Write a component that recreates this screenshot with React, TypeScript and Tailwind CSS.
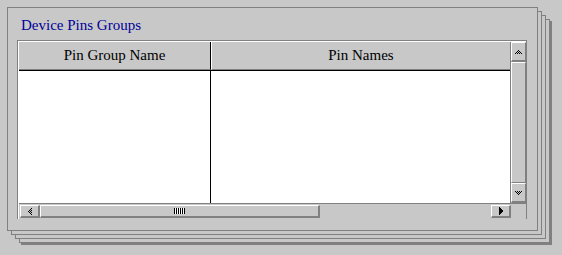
import React from 'react';

type Cell = [number, number];

// tiny pixel glyph for the scroll arrows (dithered / solid triangles)
const PixelGlyph: React.FC<{ cells: Cell[]; w: number; h: number }> = ({ cells, w, h }) => (
  <svg width={w} height={h} viewBox={`0 0 ${w} ${h}`} shapeRendering="crispEdges">
    {cells.map(([x, y]) => (
      <rect key={`${x}-${y}`} x={x} y={y} width={1} height={1} fill="#000" />
    ))}
  </svg>
);

const upCells: Cell[] = [[3, 0], [2, 1], [4, 1], [1, 2], [3, 2], [5, 2], [0, 3], [2, 3], [4, 3], [6, 3]];
const downCells: Cell[] = upCells.map(([x, y]) => [x, 3 - y] as Cell);
const leftCells: Cell[] = upCells.map(([x, y]) => [y, x] as Cell);
const rightCells: Cell[] = [
  [0, 0], [0, 1], [0, 2], [0, 3], [0, 4], [0, 5], [0, 6], [0, 7],
  [1, 1], [1, 2], [1, 3], [1, 4], [1, 5], [1, 6],
  [2, 2], [2, 3], [2, 4], [2, 5],
  [3, 3], [3, 4],
];

const App: React.FC = () => {
  return (
    <div className="relative w-[562px] h-[255px] overflow-hidden bg-[#c8c8c8] pl-[7px] pt-[7px] font-['Liberation_Serif',serif]">
      {/* pages stacked behind the front panel */}
      <div className="absolute left-[19px] top-[19px] w-[531px] h-[224px] border border-[#808080] bg-[#c8c8c8] shadow-[2px_2px_0_0_#808080]" />
      <div className="absolute left-[15px] top-[15px] w-[531px] h-[224px] border border-[#808080] bg-[#c8c8c8]" />
      <div className="absolute left-[11px] top-[11px] w-[531px] h-[224px] border border-[#808080] bg-[#c8c8c8]" />

      {/* Front panel */}
      <div className="relative w-[531px] h-[224px] border border-[#808080] bg-[#c8c8c8] pl-[9px] pt-[9px]">
        <div className="pl-[4px] h-[17px] text-[15px] leading-[17px] text-[#000099] whitespace-nowrap">
          Device Pins Groups
        </div>

        {/* Table frame */}
        <div className="mt-[6px] w-[510px] h-[179px] border-t border-l border-r border-[#808080] border-b-white">
          <div className="flex flex-col h-full border-t border-l border-white">
            {/* header + body + vertical scrollbar */}
            <div className="flex h-[161px]">
              <div className="flex flex-col w-[491px]">
                <div className="flex border-b border-black">
                  <div className="w-[192px] h-[28px] border-r border-black border-b border-b-[#808080] flex items-center justify-center text-[15px] text-black whitespace-nowrap">
                    Pin Group Name
                  </div>
                  <div className="flex-1 h-[28px] border-l border-white border-b border-b-[#808080] flex items-center justify-center text-[15px] text-black whitespace-nowrap">
                    Pin Names
                  </div>
                </div>
                <div className="flex flex-1 bg-white">
                  <div className="w-[192px] border-r border-black" />
                  <div className="flex-1" />
                </div>
              </div>

              {/* vertical scrollbar */}
              <div className="flex flex-col w-[16px] border-l border-[#808080]">
                <div className="h-[20px] border-t border-l border-white border-b-2 border-r border-b-[#808080] border-r-[#808080] flex items-center justify-center">
                  <PixelGlyph cells={upCells} w={7} h={4} />
                </div>
                <div className="flex-1 border-t border-l border-white border-b border-r border-b-[#808080] border-r-[#808080]" />
                <div className="h-[20px] border-t border-l border-white border-b-2 border-r border-b-[#808080] border-r-[#808080] flex items-center justify-center">
                  <PixelGlyph cells={downCells} w={7} h={4} />
                </div>
              </div>
            </div>

            {/* horizontal scrollbar */}
            <div className="flex h-[15px] border-t border-[#808080] pl-[1px] pt-[1px]">
              <div className="w-[20px] border-t border-l border-white border-b-2 border-r-2 border-b-[#808080] border-r-[#808080] flex items-center justify-center">
                <PixelGlyph cells={leftCells} w={4} h={7} />
              </div>
              <div className="w-[280px] border-t border-l border-white border-b-2 border-r-2 border-b-[#808080] border-r-[#808080] flex items-center justify-center">
                <div className="flex gap-px bg-white">
                  {[0, 1, 2, 3, 4, 5].map((i) => (
                    <div key={i} className="w-px h-[6px] bg-black" />
                  ))}
                </div>
              </div>
              <div className="flex-1" />
              <div className="w-[20px] border-t border-l border-white border-b-2 border-r-2 border-b-[#808080] border-r-[#808080] flex items-center justify-center">
                <PixelGlyph cells={rightCells} w={4} h={8} />
              </div>
              <div className="w-[15px]" />
            </div>
          </div>
        </div>
      </div>
    </div>
  );
};

export default App;
